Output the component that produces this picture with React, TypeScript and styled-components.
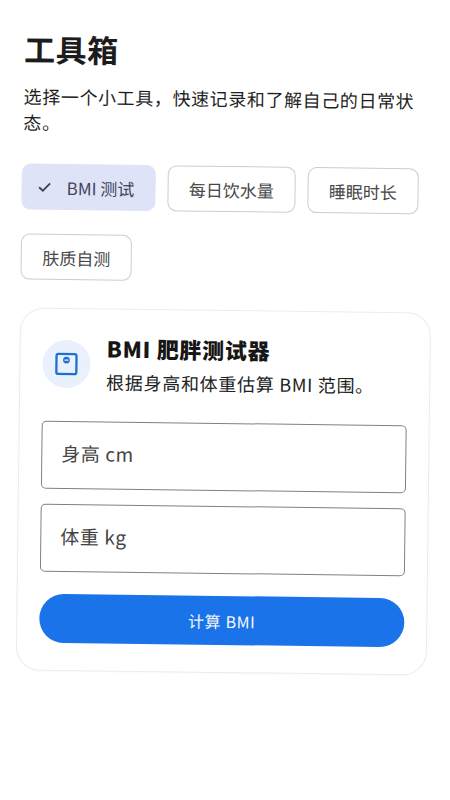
import {createGlobalStyle, styled} from 'styled-components';

const GlobalStyle = createGlobalStyle`
    html, body {
        margin: 0;
        padding: 0;
        background: #fff;
        overflow: hidden;
    }
    body {
        font-family: "Noto Sans CJK SC", "Noto Sans", sans-serif;
    }
`;

const Page = styled.div`
    width: 450px;
    height: 800px;
    box-sizing: border-box;
    padding: 30px 19px 0;
    transform: rotate(0.7deg);
    transform-origin: 225px 400px;
`;
const Title = styled.h1`
    margin: 0 0 0 1px;
    font-size: 31px;
    line-height: 41px;
    font-weight: 700;
    color: #1c1c1c;
    letter-spacing: 0.4px;
`;
const Subtitle = styled.p`
    margin: 14px 0 0 1px;
    font-size: 18px;
    line-height: 26px;
    letter-spacing: 0.6px;
    color: #1f1f1f;
`;
const Chips = styled.div`
    display: flex;
    flex-wrap: wrap;
    gap: 24px 12px;
    margin-top: 29px;
`;
const Chip = styled.div<{$selected?: boolean}>`
    height: 46px;
    box-sizing: border-box;
    display: flex;
    align-items: center;
    gap: 13px;
    padding: ${(props) => props.$selected ? '0 20px 0 13px' : '0 20.5px'};
    border-radius: 9px;
    border: 1.5px solid ${(props) => props.$selected ? '#dfe3f8' : '#cccccc'};
    background: ${(props) => props.$selected ? '#dfe3f8' : '#fff'};
    color: ${(props) => props.$selected ? '#41465c' : '#474747'};
    font-size: 17px;
`;
const Card = styled.section`
    margin-top: 28px;
    box-sizing: border-box;
    width: 411px;
    height: 363px;
    padding: 24px 22px 0;
    border: 1px solid #ececec;
    border-radius: 24px;
    background: #fff;
    box-shadow: 0 1px 2px rgba(0, 0, 0, 0.02);
`;
const CardHeader = styled.div`
    display: flex;
    gap: 16px;
    margin-bottom: 27px;
`;
const IconCircle = styled.div`
    width: 48px;
    height: 48px;
    margin-top: 7px;
    flex: none;
    border-radius: 50%;
    background: #e9f1fd;
    display: flex;
    align-items: center;
    justify-content: center;
`;
const CardTitle = styled.h2`
    margin: 0;
    font-size: 22px;
    line-height: 28px;
    font-weight: 900;
    color: #161616;
    letter-spacing: 0.7px;
`;
const CardText = styled.p`
    margin: 7px 0 0;
    font-size: 18px;
    line-height: 26px;
    letter-spacing: 0.7px;
    color: #222;
`;
const Field = styled.div`
    height: 68px;
    box-sizing: border-box;
    margin-bottom: 15px;
    padding: 0 19px 6px;
    display: flex;
    align-items: center;
    border: 1.5px solid #808080;
    border-radius: 5px;
    font-size: 19px;
    letter-spacing: 0.6px;
    color: #444;
`;
const Submit = styled.button`
    display: block;
    width: 100%;
    height: 49px;
    margin-top: 22px;
    border: none;
    border-radius: 25px;
    background: #1a73e8;
    color: #f2f7fe;
    font-family: inherit;
    font-size: 16px;
    letter-spacing: 0.6px;
`;

function CheckIcon() {
    return (
        <svg width="18" height="18" viewBox="0 0 18 18" fill="none">
            <path d="M3.5 9.5 L7.3 13 L14.5 5.5" stroke="#41465c" strokeWidth="1.9" />
        </svg>
    );
}

function ScaleIcon() {
    return (
        <svg width="24" height="24" viewBox="0 0 24 24" fill="none">
            <rect x="2" y="2" width="20" height="20" rx="2" stroke="#1f6fd0" strokeWidth="2.3" />
            <circle cx="12" cy="8" r="3.4" fill="#1f6fd0" />
            <rect x="10" y="7.4" width="4" height="1.2" fill="#e9f1fd" />
        </svg>
    );
}

export default function App() {
    return (
        <Page>
            <GlobalStyle />
            <Title>工具箱</Title>
            <Subtitle>选择一个小工具，快速记录和了解自己的日常状态。</Subtitle>
            <Chips>
                <Chip $selected><CheckIcon />BMI 测试</Chip>
                <Chip>每日饮水量</Chip>
                <Chip>睡眠时长</Chip>
                <Chip>肤质自测</Chip>
            </Chips>
            <Card>
                <CardHeader>
                    <IconCircle><ScaleIcon /></IconCircle>
                    <div>
                        <CardTitle>BMI 肥胖测试器</CardTitle>
                        <CardText>根据身高和体重估算 BMI 范围。</CardText>
                    </div>
                </CardHeader>
                <Field>身高 cm</Field>
                <Field>体重 kg</Field>
                <Submit>计算 BMI</Submit>
            </Card>
        </Page>
    );
}
